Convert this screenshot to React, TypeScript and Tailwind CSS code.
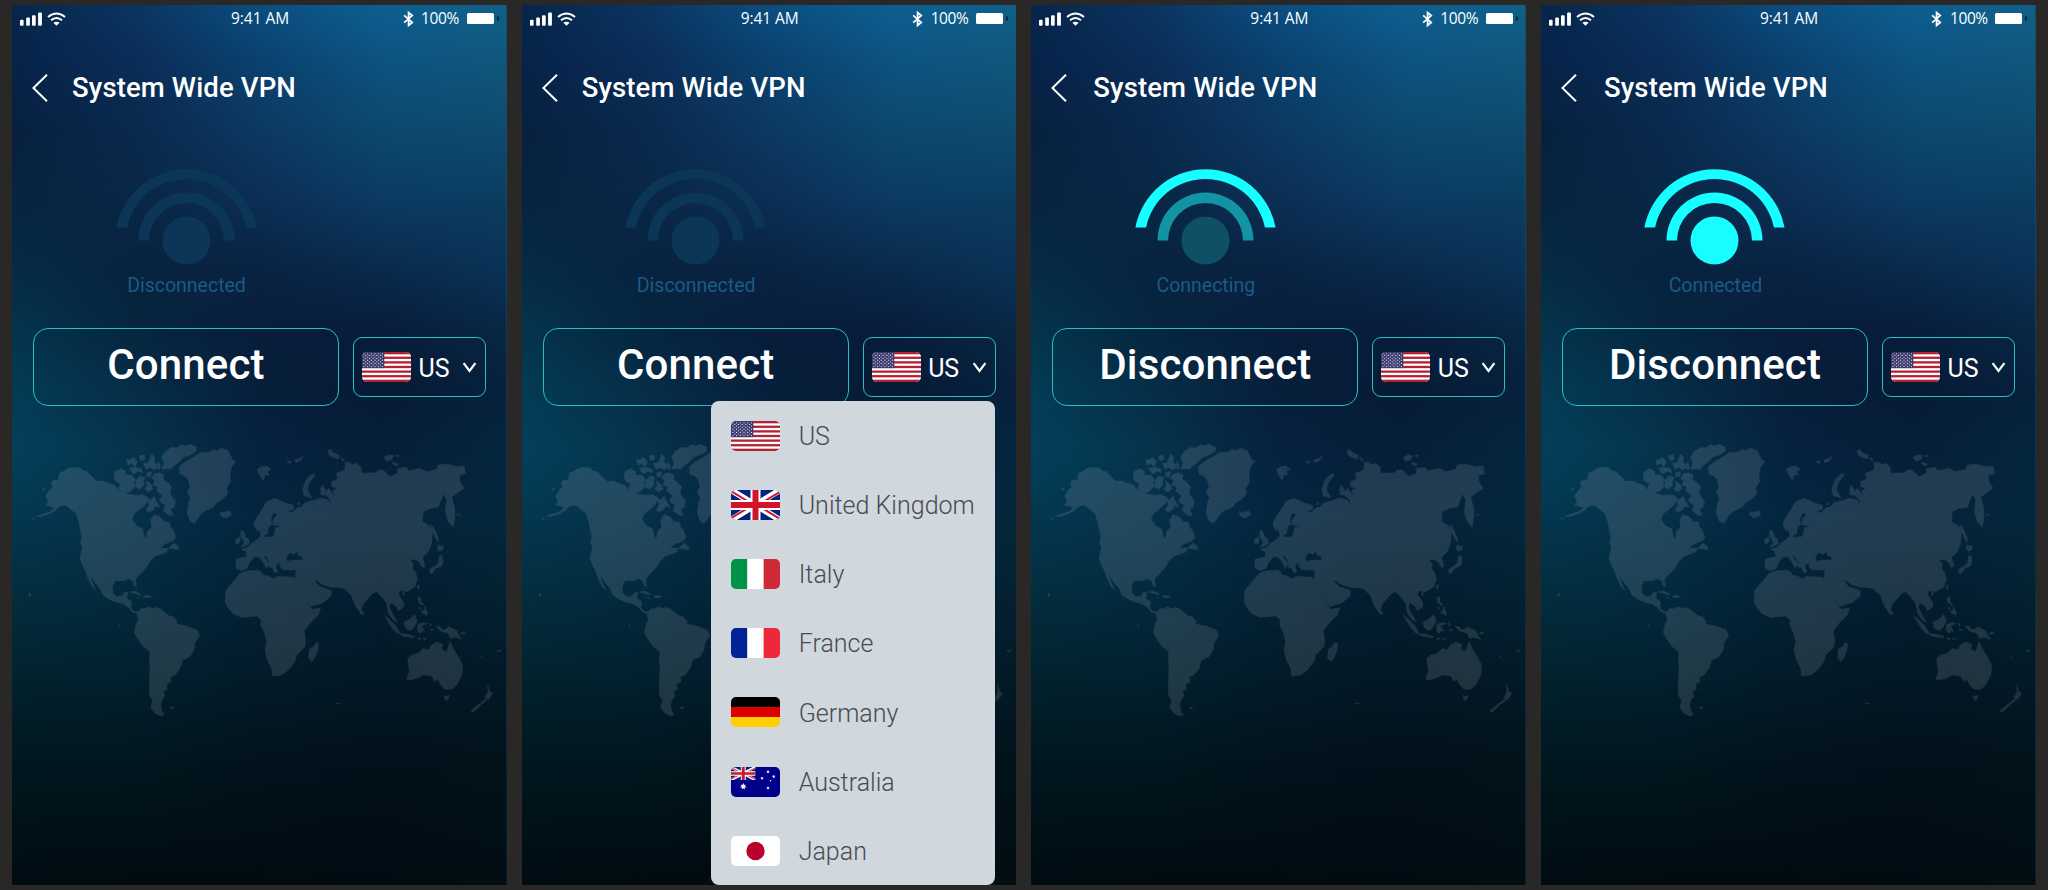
import React from "react";

type Status = "Disconnected" | "Connecting" | "Connected";

/* Backdrop: rows of horizontal gradients, cross-faded vertically. */
const meshRows: { y: number; colors: string[] }[] = [
  { y: 0, colors: ["#08264a", "#0b3561", "#0b4e80", "#0d5f92", "#116088"] },
  { y: 55, colors: ["#07234a", "#0b2d57", "#0b416f", "#0d5381", "#10577c"] },
  { y: 125, colors: ["#07213f", "#0a294e", "#0c3961", "#0d486d", "#0e4b6e"] },
  { y: 195, colors: ["#072440", "#092746", "#0c2e55", "#0c3b62", "#0b3d60"] },
  { y: 265, colors: ["#062b45", "#08233f", "#092342", "#0a2a4c", "#0a3256"] },
  { y: 325, colors: ["#05344d", "#06263f", "#081e3c", "#081d3b", "#092745"] },
  { y: 385, colors: ["#043b55", "#062e48", "#071f3b", "#071b36", "#07213c"] },
  { y: 445, colors: ["#043f5b", "#06334c", "#06223f", "#061f39", "#05263f"] },
  { y: 515, colors: ["#04374f", "#05304a", "#04263f", "#05233b", "#05273b"] },
  { y: 595, colors: ["#032d3e", "#03293d", "#032135", "#031d2f", "#042131"] },
  { y: 675, colors: ["#02222d", "#02202e", "#031b29", "#031826", "#031a27"] },
  { y: 755, colors: ["#011820", "#01171f", "#02131d", "#02111b", "#02131c"] },
  { y: 880, colors: ["#000c12", "#010b11", "#010b11", "#010b12", "#020d13"] },
];

function Backdrop({ id }: { id: string }) {
  return (
    <svg className="absolute inset-0 h-full w-full" viewBox="0 0 495 880" preserveAspectRatio="none" aria-hidden>
      <defs>
        {meshRows.map((row, i) => (
          <React.Fragment key={i}>
            <linearGradient id={`${id}h${i}`} x1="0" x2="495" y1="0" y2="0" gradientUnits="userSpaceOnUse">
              {row.colors.map((c, k) => (
                <stop key={k} offset={k / 4} stopColor={c} />
              ))}
            </linearGradient>
            {i > 0 && (
              <>
                <linearGradient id={`${id}v${i}`} x1="0" x2="0" y1={meshRows[i - 1].y} y2={row.y} gradientUnits="userSpaceOnUse">
                  <stop offset="0" stopColor="#fff" stopOpacity="0" />
                  <stop offset="1" stopColor="#fff" stopOpacity="1" />
                </linearGradient>
                <mask id={`${id}m${i}`} maskUnits="userSpaceOnUse" x="0" y="0" width="495" height="880">
                  <rect width="495" height="880" fill={`url(#${id}v${i})`} />
                </mask>
              </>
            )}
          </React.Fragment>
        ))}
      </defs>
      {meshRows.map((_, i) => (
        <rect key={i} width="495" height="880" fill={`url(#${id}h${i})`} mask={i > 0 ? `url(#${id}m${i})` : undefined} />
      ))}
    </svg>
  );
}

const westLands = [
  "M137,228 L150,208 158,203 154,185 165,180 175,181 178,160 195,152 205,145 222,142 240,144 250,153 262,155 270,164 278,172 290,184 310,183 325,190 345,196 352,206 365,213 385,222 405,226 428,224 445,233 438,252 420,268 402,282 396,298 410,318 428,326 433,350 440,356 442,335 455,322 452,300 462,284 480,290 492,305 508,306 512,322 520,330 528,352 520,362 495,372 480,385 505,384 500,396 485,402 465,408 450,424 440,440 425,458 412,470 406,480 410,500 403,498 398,482 385,476 370,482 345,482 337,500 338,518 350,530 368,528 372,518 384,517 380,535 395,545 393,565 405,575 415,575 410,580 398,577 385,562 370,552 345,545 325,536 308,524 300,505 285,488 276,474 270,468 280,495 287,510 278,502 262,470 258,455 250,440 240,415 247,385 242,365 248,345 240,330 238,305 228,280 210,266 198,256 180,258 165,272 145,282 125,289 108,289 150,275 163,262 150,258 137,256 145,245 Z",
  "M538,140 L552,128 580,112 600,98 628,96 640,88 650,92 665,85 685,92 692,108 700,122 708,124 695,140 690,165 692,185 680,205 683,220 668,238 650,248 640,262 615,272 600,285 590,302 582,310 570,302 562,280 565,250 572,235 562,218 570,200 565,180 555,168 540,162 Z",
  "M661,274 L668,278 680,275 690,273 695,284 680,293 670,292 662,284 Z",
  "M485,148 L492,130 485,112 495,95 515,82 530,84 545,74 558,78 570,72 590,82 588,95 570,105 550,112 535,128 520,138 512,148 500,146 Z",
  "M462,162 L478,158 492,165 490,178 500,185 515,200 510,222 520,235 527,245 522,262 512,268 520,287 505,285 490,272 495,255 478,240 488,228 470,212 474,200 458,195 465,182 455,175 Z",
  "M342,172 L345,155 362,146 378,155 375,165 395,165 408,180 402,190 405,200 390,215 372,218 355,204 362,192 348,184 Z",
  "M380,118 L390,120 400,112 412,125 405,140 395,130 384,136 Z M418,108 L432,104 435,118 422,122 Z M388,145 L405,142 424,146 428,158 415,154 400,162 Z M430,130 L445,128 455,102 464,112 462,125 475,140 462,150 450,142 438,148 Z M410,178 L420,168 435,172 430,185 432,195 418,208 406,200 Z M438,182 L452,192 460,206 446,216 434,206 442,198 Z M440,235 L452,240 462,228 470,245 480,262 466,258 462,268 448,276 438,270 448,254 Z M440,158 L455,155 452,170 440,170 Z M474,125 L482,138 478,150 470,142 Z M480,240 L490,232 492,248 484,250 Z",
  "M506,385 L515,376 522,368 528,374 536,380 537,390 526,388 Z M388,516 L405,513 425,524 412,523 396,518 Z M436,526 L455,529 447,534 430,531 Z M412,532 L420,533 415,535 Z",
  "M410,578 L418,572 425,564 432,568 445,560 460,566 470,562 484,568 495,578 508,588 520,590 532,605 528,612 545,615 560,618 575,624 592,630 599,648 585,668 582,690 570,710 548,720 540,745 525,765 510,772 514,785 500,792 502,808 490,815 495,828 486,840 482,855 485,872 493,885 482,888 465,880 452,862 458,842 448,825 448,790 450,750 448,710 450,695 430,680 412,655 403,638 408,615 415,600 Z",
  "M723,330 L732,336 736,350 746,358 748,372 735,378 723,383 733,366 722,350 Z M706,360 L718,350 721,362 716,371 707,370 Z",
  "M127,204 L134,206 131,212 Z M96,295 L102,294 100,299 Z M86,518 L93,522 89,530 Z M231,288 L240,300 238,312 Z M510,861 L522,862 516,867 Z M357,615 L360,616 358,622 Z M240,340 L252,356 246,352 Z",
];

const eastLands = [
  "M-60,460 L-40,453 -5,450 5,456 10,465 25,468 40,476 55,468 70,470 100,472 108,490 125,520 148,560 158,568 182,563 175,585 150,610 133,632 137,660 135,680 110,705 105,725 85,750 65,765 38,768 35,745 22,720 15,690 20,665 12,635 2,615 4,600 -10,588 -35,590 -55,592 -80,582 -95,565 -105,545 -102,510 -85,490 -68,470 Z",
  "M148,688 L160,680 168,668 176,670 175,685 165,715 155,724 146,715 Z",
  "M-72,418 L-50,412 -40,412 -42,395 -55,388 -35,382 -25,370 -10,360 0,352 3,343 -2,330 4,326 10,342 14,352 40,350 46,332 44,324 66,318 40,316 38,302 52,282 40,278 32,300 36,312 26,320 22,342 12,346 6,326 -8,332 -18,318 -16,305 -8,290 5,270 20,245 45,235 58,240 75,248 100,256 102,268 86,272 92,280 106,270 112,262 122,262 135,248 165,240 185,234 205,240 214,258 212,240 196,225 183,224 182,205 188,195 198,215 206,205 225,232 218,212 232,205 215,200 215,185 232,178 230,160 255,150 256,126 275,135 290,130 303,140 305,160 350,158 353,150 370,150 390,170 412,160 412,145 440,142 445,152 480,145 500,155 530,148 535,135 560,132 590,140 612,138 617,162 598,165 600,185 612,205 590,220 575,232 584,262 585,290 580,322 565,305 556,275 560,240 552,222 545,235 535,262 510,265 490,275 487,305 505,315 517,330 515,370 505,395 488,412 495,440 487,442 478,426 465,418 450,420 460,432 458,445 468,460 472,478 465,500 440,515 420,512 415,522 430,545 432,560 415,572 408,558 392,548 388,562 398,582 412,606 400,600 385,578 380,550 365,530 350,515 338,520 320,540 308,555 305,570 313,583 303,583 285,555 272,522 262,516 256,508 240,503 215,502 190,495 168,480 166,485 180,500 195,505 215,512 213,528 190,548 165,556 150,560 135,535 118,508 102,485 106,470 108,450 85,450 66,448 58,434 64,428 52,432 48,440 54,456 44,458 36,440 20,412 10,404 14,414 30,432 38,440 32,444 24,436 20,446 5,420 -5,410 -18,412 -32,428 -38,445 -55,452 -72,445 Z M78,416 L84,402 94,398 100,404 112,394 114,404 128,412 128,421 110,420 96,420 84,424 Z",
  "M-8,148 L4,140 20,138 34,148 22,154 28,166 16,164 10,180 4,174 -4,160 Z M80,124 L95,124 90,131 Z M104,120 L118,116 130,108 122,122 108,128 Z",
  "M133,228 L128,208 138,180 148,168 162,160 165,166 148,188 142,208 155,234 145,230 Z M204,92 L212,88 220,98 238,106 236,117 218,112 206,104 Z M242,112 L254,120 248,124 Z M255,128 L268,126 280,136 266,142 Z M372,112 L388,104 402,108 394,120 380,124 Z M406,106 L418,106 414,112 Z M396,126 L412,130 414,137 400,134 Z M112,252 L118,246 120,254 Z",
  "M508,452 L514,444 526,438 536,428 538,408 546,406 549,425 544,438 528,444 520,456 512,462 Z M534,374 L541,378 551,378 548,390 538,394 532,388 Z M512,314 L520,320 534,352 536,366 530,360 518,336 Z",
  "M474,532 L482,530 483,546 492,554 486,556 476,546 Z M484,576 L496,566 503,578 500,586 488,580 Z M471,498 L478,494 476,510 Z M426,520 L434,517 430,528 Z M478,560 L483,564 480,570 Z M492,560 L498,562 495,568 Z",
  "M373,586 L388,598 408,618 420,638 412,641 396,624 Z M417,641 L440,642 465,650 460,653 430,649 Z M432,606 L450,598 464,584 472,604 462,622 452,632 436,624 Z M474,612 L490,608 502,611 484,617 494,634 486,632 480,641 472,630 Z M472,654 L484,655 478,659 Z M490,656 L502,654 494,660 Z M508,608 L514,612 511,620 Z M510,628 L522,630 512,632 Z M528,618 L540,620 548,630 560,626 566,620 590,632 598,648 606,658 585,652 572,656 564,640 540,632 Z M600,640 L612,636 616,640 604,643 Z",
  "M443,715 L455,705 475,700 490,685 505,690 515,675 530,666 548,673 545,688 560,695 570,664 582,690 595,710 608,735 606,765 590,795 575,808 555,808 540,792 534,778 524,784 515,768 490,765 470,775 450,780 440,778 448,755 Z",
  "M552,827 L560,829 568,826 564,838 557,843 Z M683,794 L690,815 698,820 685,840 674,834 684,816 Z M676,838 L680,842 665,852 650,868 638,877 632,872 650,858 Z M660,708 L672,716 668,714 Z M710,692 L726,690 716,696 Z M228,849 L242,850 232,852 Z M590,283 L602,284 594,286 Z",
];

function WorldMap() {
  return (
    <svg className="mt-[14px] h-80 w-full shrink-0" viewBox="36 0 1484 960" aria-hidden>
      <g fill="#ffffff" fillRule="evenodd" stroke="#ffffff" strokeWidth="1.5" strokeLinejoin="round" opacity="0.115">
        {westLands.map((d, i) => (
          <path key={i} d={d} />
        ))}
        <g transform="translate(780 0)">
          {eastLands.map((d, i) => (
            <path key={i} d={d} />
          ))}
        </g>
      </g>
    </svg>
  );
}

function UsFlag() {
  const stars = [];
  for (let r = 0; r < 9; r++) {
    for (let c = 0; c < (r % 2 ? 5 : 6); c++) {
      stars.push(<circle key={`${r}-${c}`} cx={1.9 + c * 3.7 + (r % 2 ? 1.85 : 0)} cy={1.8 + r * 1.6} r="0.62" />);
    }
  }
  return (
    <>
      <rect width="49" height="30" fill="#fff" />
      {[0, 2, 4, 6, 8, 10, 12].map((i) => (
        <rect key={i} y={(i * 30) / 13} width="49" height={30 / 13} fill="#b22234" />
      ))}
      <rect width="22.3" height="16.15" fill="#3c3b6e" />
      <g fill="#fff" fillOpacity="0.85">{stars}</g>
    </>
  );
}

function UnionJack() {
  return (
    <>
      <rect width="49" height="30" fill="#00247d" />
      <path d="M0,0 L49,30 M49,0 L0,30" stroke="#fff" strokeWidth="6" />
      <path d="M0,1 L24.5,16 M49,29 L24.5,14 M49,1.8 L27,15 M0,28.2 L22,15" stroke="#cf142b" strokeWidth="2" />
      <path d="M24.5,0 V30 M0,15 H49" stroke="#fff" strokeWidth="10" />
      <path d="M24.5,0 V30 M0,15 H49" stroke="#cf142b" strokeWidth="6" />
    </>
  );
}

function star(cx: number, cy: number, r: number) {
  const pts: string[] = [];
  for (let i = 0; i < 14; i++) {
    const a = (Math.PI * i) / 7 - Math.PI / 2;
    const d = i % 2 ? r * 0.5 : r;
    pts.push(`${(cx + d * Math.cos(a)).toFixed(2)},${(cy + d * Math.sin(a)).toFixed(2)}`);
  }
  return <polygon key={`${cx}-${cy}`} points={pts.join(" ")} fill="#fff" />;
}

function bands(colors: string[], vertical: boolean) {
  return colors.map((c, i) =>
    vertical ? (
      <rect key={i} x={(i * 49) / 3} width={49 / 3 + 0.1} height="30" fill={c} />
    ) : (
      <rect key={i} y={i * 10} width="49" height="10.1" fill={c} />
    ),
  );
}

const flags: Record<string, React.ReactNode> = {
  US: <UsFlag />,
  "United Kingdom": <UnionJack />,
  Italy: bands(["#009246", "#ffffff", "#ce2b37"], true),
  France: bands(["#002395", "#ffffff", "#ed2939"], true),
  Germany: bands(["#000000", "#dd0000", "#ffce00"], false),
  Australia: (
    <>
      <rect width="49" height="30" fill="#00008b" />
      <svg width="24.5" height="13" viewBox="0 0 49 30" preserveAspectRatio="none">
        <UnionJack />
      </svg>
      {star(12.3, 19.5, 3.4)}
      {star(37, 4.8, 1.7)}
      {star(31, 11.2, 1.7)}
      {star(42.7, 9.6, 1.7)}
      {star(37, 21, 1.7)}
      {star(39.6, 13.8, 1)}
    </>
  ),
  Japan: (
    <>
      <rect width="49" height="30" fill="#fff" />
      <circle cx="24.5" cy="15" r="9.2" fill="#bc002d" />
    </>
  ),
};

function Flag({ country }: { country: string }) {
  return (
    <svg className="h-[30px] w-[49px] shrink-0 rounded-[5px]" viewBox="0 0 49 30" aria-hidden>
      {flags[country]}
    </svg>
  );
}

function StatusBar() {
  return (
    <div className="flex h-[27px] shrink-0 items-center pl-2 font-['Open_Sans',sans-serif] text-[15.5px] text-white">
      <svg className="h-[14px] w-[46px]" viewBox="0 0 46 14" aria-hidden>
        <g fill="#fff">
          <rect x="0" y="7.7" width="3.6" height="6" rx="1" />
          <rect x="6.2" y="5.6" width="3.7" height="8.1" rx="1" />
          <rect x="12" y="3.2" width="3.7" height="10.5" rx="1" />
          <rect x="18.1" y="0.6" width="3.8" height="13.1" rx="1" />
        </g>
        <g fill="none" stroke="#fff" strokeWidth="1.9">
          <path d="M28,5 Q36.5,-2 45,5" />
          <path d="M31,8.2 Q36.5,3.6 42,8.2" />
        </g>
        <path d="M33.4,10.8 Q36.5,8.6 39.6,10.8 L36.5,13.8 Z" fill="#fff" />
      </svg>
      <span className="ml-[165px] w-[58px] whitespace-nowrap tracking-[-0.05px]">9:41 AM</span>
      <svg className="ml-[113.5px] h-4 w-[11px]" viewBox="0 0 11 16" aria-hidden>
        <path d="M1.2,4.4 L9.2,11.4 L5.6,14.4 V1.6 L9.2,4.6 L1.2,11.6" fill="none" stroke="#fff" strokeWidth="1.8" />
      </svg>
      <span className="ml-[7.5px] w-[39px] whitespace-nowrap tracking-[-0.4px]">100%</span>
      <span className="ml-[6.5px] h-[11px] w-[27px] rounded-[1.5px] bg-white" />
      <span className="ml-[3px] h-[5px] w-[2px] rounded-r-full bg-[#08213b]" />
    </div>
  );
}

const signalColors: Record<Status, [string, string, string]> = {
  Disconnected: ["#0c3658", "#0c3658", "#0c3658"],
  Connecting: ["#18fdff", "#1394a5", "#0f5066"],
  Connected: ["#18fdff", "#18fdff", "#18fdff"],
};

function Signal({ status }: { status: Status }) {
  const [outer, inner, dot] = signalColors[status];
  return (
    <svg className="mt-[67px] h-[96px] w-[142px] shrink-0" viewBox="0.5 0.5 142 96" aria-hidden>
      <path d="M0.9,59 A71.3,71.3 0 0 1 141.1,59 H130.4 A60.6,60.6 0 0 0 11.6,59 Z" fill={outer} />
      <path d="M23,72 A48,48 0 0 1 119,72 H108.5 A37.5,37.5 0 0 0 33.5,72 Z" fill={inner} />
      <circle cx="71" cy="72" r="24" fill={dot} />
    </svg>
  );
}

const countries = ["US", "United Kingdom", "Italy", "France", "Germany", "Australia", "Japan"];

function CountryMenu() {
  return (
    <ul className="absolute left-[189px] top-[396px] flex h-[484px] w-[284.5px] flex-col rounded-lg bg-[#d0d7dd] pl-5">
      {countries.map((c) => (
        <li key={c} className="flex h-[69.2px] shrink-0 items-center gap-[19px] text-[25px] font-light text-[#474c52]">
          <Flag country={c} />
          <span className="whitespace-nowrap pt-[2px] tracking-[0.02px]">{c}</span>
        </li>
      ))}
    </ul>
  );
}

function Phone({ id, status, menu, titlePad }: { id: string; status: Status; menu?: boolean; titlePad: string }) {
  return (
    <section className="relative flex h-[880px] w-[494.67px] shrink-0 flex-col overflow-hidden">
      <Backdrop id={id} />
      <div className="relative flex h-full flex-col">
        <StatusBar />
        <header className="mt-[42px] flex h-7 shrink-0 items-center pl-5">
          <svg className="h-7 w-4 shrink-0" viewBox="0 0 16 28" aria-hidden>
            <path d="M15,0.8 L1.4,14 L15,27.2" fill="none" stroke="#fff" strokeWidth="2" />
          </svg>
          <h1 className={`${titlePad} whitespace-nowrap text-[27.5px] font-medium leading-7 tracking-[0.13px] text-white`}>
            System Wide VPN
          </h1>
        </header>
        <div className="flex w-[349px] shrink-0 flex-col items-center">
          <Signal status={status} />
          <p className="mt-[9px] whitespace-nowrap text-[19.5px] leading-6 text-[#1b5a86]">{status}</p>
        </div>
        <div className="mt-[30px] flex shrink-0 items-center gap-[14px] pl-[21px]">
          <button className="flex h-[78px] w-[306px] justify-center rounded-[15px] border border-[#29bfc6] pt-[11px] text-[42px] font-medium leading-[50px] tracking-[0.15px] text-white">
            {status === "Disconnected" ? "Connect" : "Disconnect"}
          </button>
          <button className="flex h-[60px] w-[133px] items-center rounded-[9px] border border-[#29bfc6] pl-2 text-white">
            <Flag country="US" />
            <span className="ml-[7px] mt-1 w-[32px] text-[25px]">US</span>
            <svg className="ml-[12px] h-[11px] w-[15px]" viewBox="0 0 15 11" aria-hidden>
              <path d="M1.6,1.2 L7.5,9 L13.4,1.2" fill="none" stroke="#fff" strokeWidth="2.2" />
            </svg>
          </button>
        </div>
        <WorldMap />
      </div>
      {menu && <CountryMenu />}
    </section>
  );
}

export default function App() {
  return (
    <main className="flex h-[890px] w-[2048px] gap-[15px] overflow-hidden bg-[#292827] pl-3 pt-[5px] font-[Roboto,sans-serif]">
      <Phone id="a" status="Disconnected" titlePad="ml-6" />
      <Phone id="b" status="Disconnected" menu titlePad="ml-6" />
      <Phone id="c" status="Connecting" titlePad="ml-[26px]" />
      <Phone id="d" status="Connected" titlePad="ml-[27px]" />
    </main>
  );
}
